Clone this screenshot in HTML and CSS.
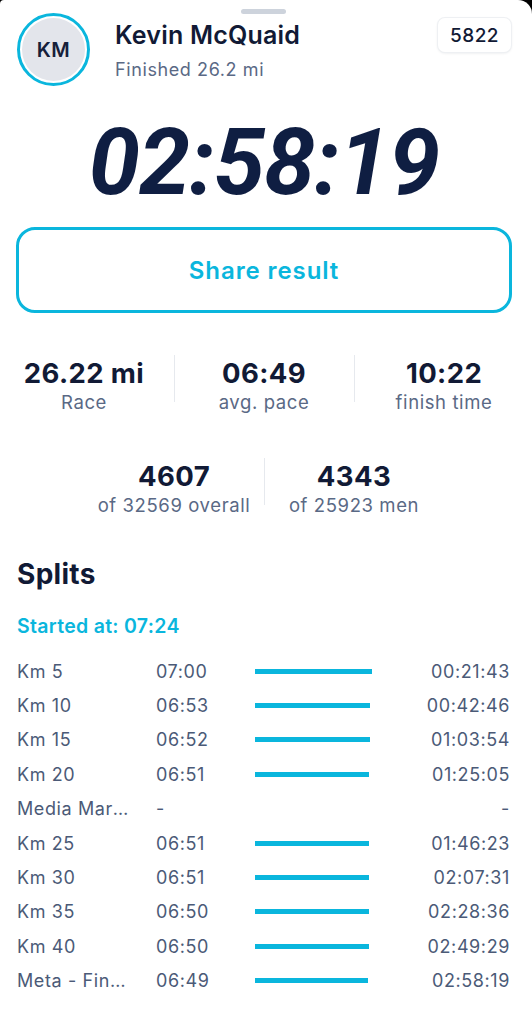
FILE: index.html
```html
<!DOCTYPE html>
<html lang="en">
<head>
  <meta charset="UTF-8">
  <meta name="viewport" content="width=device-width, initial-scale=1.0">
  <title>Kevin McQuaid - Result</title>
  <link rel="stylesheet" href="styles.css">
</head>
<body>
  <div class="sheet">
    <div class="grabber"></div>

    <div class="header">
      <div class="avatar"><span>KM</span></div>
      <div class="runner">
        <div class="runner-name">Kevin McQuaid</div>
        <div class="runner-status">Finished 26.2 mi</div>
      </div>
      <div class="bib">5822</div>
    </div>

    <div class="finish-time">02:58:19</div>

    <button class="share-btn" type="button">Share result</button>

    <div class="stats">
      <div class="stat">
        <div class="stat-value">26.22 mi</div>
        <div class="stat-label">Race</div>
      </div>
      <div class="divider"></div>
      <div class="stat">
        <div class="stat-value">06:49</div>
        <div class="stat-label">avg. pace</div>
      </div>
      <div class="divider"></div>
      <div class="stat">
        <div class="stat-value">10:22</div>
        <div class="stat-label">finish time</div>
      </div>
    </div>

    <div class="stats stats-rank">
      <div class="stat">
        <div class="stat-value">4607</div>
        <div class="stat-label">of 32569 overall</div>
      </div>
      <div class="divider"></div>
      <div class="stat">
        <div class="stat-value">4343</div>
        <div class="stat-label">of 25923 men</div>
      </div>
    </div>

    <h2 class="splits-title">Splits</h2>
    <div class="started">Started at: 07:24</div>

    <ul class="splits">
      <li class="split"><span class="split-name">Km 5</span><span class="split-pace">07:00</span><span class="split-bar"><i style="width: 117px"></i></span><span class="split-time">00:21:43</span></li>
      <li class="split"><span class="split-name">Km 10</span><span class="split-pace">06:53</span><span class="split-bar"><i style="width: 115px"></i></span><span class="split-time">00:42:46</span></li>
      <li class="split"><span class="split-name">Km 15</span><span class="split-pace">06:52</span><span class="split-bar"><i style="width: 115px"></i></span><span class="split-time">01:03:54</span></li>
      <li class="split"><span class="split-name">Km 20</span><span class="split-pace">06:51</span><span class="split-bar"><i style="width: 114px"></i></span><span class="split-time">01:25:05</span></li>
      <li class="split"><span class="split-name">Media Maratón</span><span class="split-pace">-</span><span class="split-bar"></span><span class="split-time">-</span></li>
      <li class="split"><span class="split-name">Km 25</span><span class="split-pace">06:51</span><span class="split-bar"><i style="width: 114px"></i></span><span class="split-time">01:46:23</span></li>
      <li class="split"><span class="split-name">Km 30</span><span class="split-pace">06:51</span><span class="split-bar"><i style="width: 114px"></i></span><span class="split-time">02:07:31</span></li>
      <li class="split"><span class="split-name">Km 35</span><span class="split-pace">06:50</span><span class="split-bar"><i style="width: 114px"></i></span><span class="split-time">02:28:36</span></li>
      <li class="split"><span class="split-name">Km 40</span><span class="split-pace">06:50</span><span class="split-bar"><i style="width: 114px"></i></span><span class="split-time">02:49:29</span></li>
      <li class="split"><span class="split-name">Meta - Finish</span><span class="split-pace">06:49</span><span class="split-bar"><i style="width: 113px"></i></span><span class="split-time">02:58:19</span></li>
    </ul>
  </div>
</body>
</html>
```

FILE: styles.css
```css
html, body {
  margin: 0;
  background: #000;
}

body {
  font-family: Inter, "Noto Sans", sans-serif;
  color: #111a35;
}

.sheet {
  position: relative;
  min-height: 1024px;
  box-sizing: border-box;
  padding: 13px 20px 0 16px;
  background: #fff;
  border-radius: 4px 14px 0 0;
  overflow: hidden;
}

.grabber {
  position: absolute;
  top: 9px;
  left: 241px;
  width: 45px;
  height: 5px;
  border-radius: 3px;
  background: #cdd3dc;
}

/* header */
.header {
  display: flex;
  align-items: flex-start;
}

.avatar {
  flex: 0 0 auto;
  width: 73px;
  height: 73px;
  margin-left: 1px;
  box-sizing: border-box;
  border: 3px solid #0ab6dd;
  border-radius: 50%;
  padding: 2px;
  background: #fff;
}

.avatar span {
  display: flex;
  align-items: center;
  justify-content: center;
  width: 100%;
  height: 100%;
  border-radius: 50%;
  background: #e3e5eb;
  font-size: 20px;
  font-weight: 600;
  letter-spacing: 0.5px;
  color: #16203a;
}

.runner {
  flex: 1;
  margin-left: 25px;
  margin-top: 7px;
}

.runner-name {
  font-size: 25px;
  line-height: 30px;
  font-weight: 600;
  letter-spacing: 0.2px;
}

.runner-status {
  margin-top: 9px;
  font-size: 18px;
  line-height: 22px;
  letter-spacing: 0.6px;
  color: #5a6985;
}

.bib {
  margin-top: 5px;
  width: 73px;
  height: 34px;
  margin-right: 1px;
  display: flex;
  align-items: center;
  justify-content: center;
  border-radius: 7px;
  background: #fff;
  box-shadow: 0 0 0 1px #eef0f3, 0 1px 3px rgba(20, 30, 60, 0.12);
  font-size: 19px;
  font-weight: 500;
  letter-spacing: 0.5px;
}

/* finish time */
.finish-time {
  margin-top: 27px;
  font-family: Roboto, "Liberation Sans", sans-serif;
  font-size: 92px;
  line-height: 100px;
  font-weight: 700;
  font-style: italic;
  letter-spacing: -1px;
  text-align: center;
  color: #0f1e42;
}

.share-btn {
  display: block;
  width: 100%;
  height: 86px;
  margin-top: 14px;
  border: 3px solid #0ab6dd;
  border-radius: 19px;
  background: #fff;
  font-family: Inter, "Noto Sans", sans-serif;
  font-size: 24px;
  font-weight: 600;
  letter-spacing: 0.9px;
  color: #0ab6dd;
  cursor: pointer;
}

/* stats */
.stats {
  display: flex;
  justify-content: center;
  margin: 44px -22px 0 -22px;
}

.stats-rank {
  margin-top: 45px;
}

.stat {
  flex: 0 0 180px;
  text-align: center;
}

.stat-value {
  font-size: 27.5px;
  line-height: 32px;
  font-weight: 700;
  letter-spacing: 0.4px;
}

.stat-label {
  font-size: 18.5px;
  line-height: 26px;
  letter-spacing: 0.6px;
  color: #5a6985;
}

.divider {
  flex: 0 0 1px;
  height: 47px;
  margin: -2px -1px 0 0;
  background: #e6e9ee;
}

/* splits */
.splits-title {
  margin: 40px 0 0 1px;
  font-size: 28px;
  line-height: 32px;
  font-weight: 700;
  letter-spacing: 0.3px;
}

.started {
  margin: 24px 0 0 1px;
  font-size: 19.5px;
  line-height: 24px;
  font-weight: 600;
  letter-spacing: 0.3px;
  color: #0ab6dd;
}

.splits {
  list-style-type: none;
  margin: 16px 0 0 0;
  padding: 0;
}

.split {
  display: grid;
  grid-template-columns: 140px 99px 117px 1fr;
  align-items: center;
  height: 34.4px;
  font-size: 18px;
  letter-spacing: 0.6px;
  color: #4b5a77;
}

.split-name {
  padding-left: 1px;
  padding-right: 26px;
  white-space: nowrap;
  overflow: hidden;
  text-overflow: ellipsis;
}

.split-bar {
  display: flex;
  align-items: center;
  height: 100%;
}

.split-bar i {
  display: block;
  height: 5px;
  background: #0ab6dd;
}

.split-time {
  text-align: right;
  padding-right: 2px;
}
```
